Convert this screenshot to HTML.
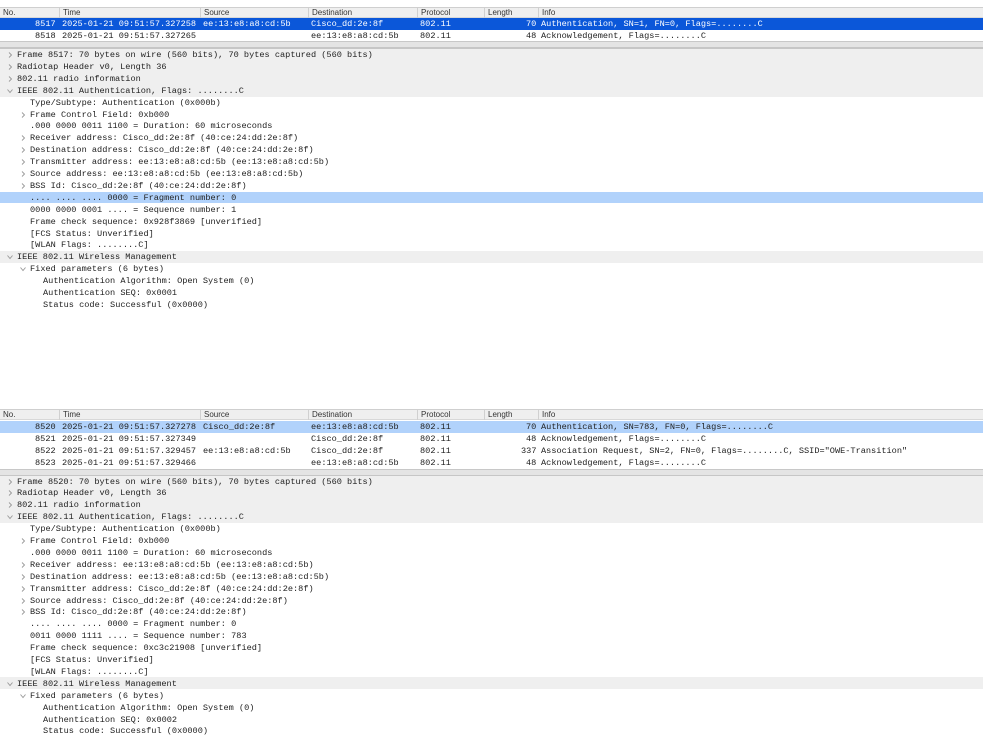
<!DOCTYPE html>
<html><head><meta charset="utf-8"><style>
*{margin:0;padding:0;box-sizing:border-box}
body{width:999px;height:752px;background:#fff;position:relative;overflow:hidden;font-family:"Liberation Mono",monospace;font-size:8.6px;color:#222}
.hdr{position:absolute;left:0;width:983px;height:11px;background:#efefef;border-top:1px solid #cfcfcf;border-bottom:1px solid #d8d8d8;font-family:"Liberation Sans",sans-serif;font-size:8px;color:#333}
.hdr span{position:absolute;top:0;line-height:10px;padding-left:3px;border-left:1px solid #d0d0d0}
.row{position:absolute;left:0;width:983px;height:12px;line-height:12px;white-space:pre}
.row span{position:absolute;top:0}
.sel{background:#0b57d9;color:#fff}
.lsel{background:#b1d2fb}
.gray{background:#efefef}
.sep{position:absolute;left:0;width:983px;height:8px;background:#e4e4e4;border-top:1px solid #c8c8c8;border-bottom:2px solid #c6c6c6}
.d{position:absolute;left:0;width:983px;height:12px;line-height:12px;white-space:pre}
.d svg{position:absolute;top:3px}
</style></head><body>

<div class="hdr" style="top:7px"><span style="left:0;border:0">No.</span><span style="left:59px">Time</span><span style="left:200px">Source</span><span style="left:308px">Destination</span><span style="left:417px">Protocol</span><span style="left:484px">Length</span><span style="left:538px">Info</span></div>
<div class="row sel" style="top:18px"><span style="left:35px">8517</span><span style="left:62px">2025-01-21 09:51:57.327258</span><span style="left:203px">ee:13:e8:a8:cd:5b</span><span style="left:311px">Cisco_dd:2e:8f</span><span style="left:420px">802.11</span><span style="left:526px">70</span><span style="left:541px">Authentication, SN=1, FN=0, Flags=........C</span></div>
<div class="row" style="top:30px"><span style="left:35px">8518</span><span style="left:62px">2025-01-21 09:51:57.327265</span><span style="left:311px">ee:13:e8:a8:cd:5b</span><span style="left:420px">802.11</span><span style="left:526px">48</span><span style="left:541px">Acknowledgement, Flags=........C</span></div>
<div class="sep" style="top:41px"></div>

<div class="gray" style="position:absolute;left:0;top:49px;width:983px;height:48px"></div>
<div class="gray" style="position:absolute;left:0;top:251px;width:983px;height:12px"></div>
<div class="lsel" style="position:absolute;left:0;top:192px;width:983px;height:11px"></div>

<div id="top"></div>

<div class="hdr" style="top:409px"><span style="left:0;border:0">No.</span><span style="left:59px">Time</span><span style="left:200px">Source</span><span style="left:308px">Destination</span><span style="left:417px">Protocol</span><span style="left:484px">Length</span><span style="left:538px">Info</span></div>
<div class="row lsel" style="top:421px"><span style="left:35px">8520</span><span style="left:62px">2025-01-21 09:51:57.327278</span><span style="left:203px">Cisco_dd:2e:8f</span><span style="left:311px">ee:13:e8:a8:cd:5b</span><span style="left:420px">802.11</span><span style="left:526px">70</span><span style="left:541px">Authentication, SN=783, FN=0, Flags=........C</span></div>
<div class="row" style="top:433px"><span style="left:35px">8521</span><span style="left:62px">2025-01-21 09:51:57.327349</span><span style="left:311px">Cisco_dd:2e:8f</span><span style="left:420px">802.11</span><span style="left:526px">48</span><span style="left:541px">Acknowledgement, Flags=........C</span></div>
<div class="row" style="top:445px"><span style="left:35px">8522</span><span style="left:62px">2025-01-21 09:51:57.329457</span><span style="left:203px">ee:13:e8:a8:cd:5b</span><span style="left:311px">Cisco_dd:2e:8f</span><span style="left:420px">802.11</span><span style="left:521px">337</span><span style="left:541px">Association Request, SN=2, FN=0, Flags=........C, SSID="OWE-Transition"</span></div>
<div class="row" style="top:457px"><span style="left:35px">8523</span><span style="left:62px">2025-01-21 09:51:57.329466</span><span style="left:311px">ee:13:e8:a8:cd:5b</span><span style="left:420px">802.11</span><span style="left:526px">48</span><span style="left:541px">Acknowledgement, Flags=........C</span></div>
<div class="sep" style="top:469px"></div>
<div class="gray" style="position:absolute;left:0;top:476px;width:983px;height:47px"></div>
<div class="gray" style="position:absolute;left:0;top:677px;width:983px;height:12px"></div>

<div id="bot"></div>

<script>
function R(x){return '<svg width="6" height="6" style="left:'+x+'px" viewBox="0 0 6 6"><polyline points="2,0.5 4.5,3 2,5.5" fill="none" stroke="#999" stroke-width="0.9"/></svg>';}
function V(x){return '<svg width="6" height="6" style="left:'+x+'px" viewBox="0 0 6 6"><polyline points="0.5,1.5 3,4.5 5.5,1.5" fill="none" stroke="#999" stroke-width="0.9"/></svg>';}
function build(id,y0,lines){var h='';lines.forEach(function(l,i){var x=17+13*l[0];var ic=l[1]=='r'?R(x-10):(l[1]=='v'?V(x-10):'');h+='<div class="d" style="top:'+(y0+i*11.9)+'px">'+ic+'<span style="position:absolute;left:'+x+'px">'+l[2]+'</span></div>';});document.getElementById(id).outerHTML=h;}
var common1=[[0,'r','Frame 8517: 70 bytes on wire (560 bits), 70 bytes captured (560 bits)'],[0,'r','Radiotap Header v0, Length 36'],[0,'r','802.11 radio information'],[0,'v','IEEE 802.11 Authentication, Flags: ........C'],[1,'','Type/Subtype: Authentication (0x000b)'],[1,'r','Frame Control Field: 0xb000'],[1,'','.000 0000 0011 1100 = Duration: 60 microseconds'],[1,'r','Receiver address: Cisco_dd:2e:8f (40:ce:24:dd:2e:8f)'],[1,'r','Destination address: Cisco_dd:2e:8f (40:ce:24:dd:2e:8f)'],[1,'r','Transmitter address: ee:13:e8:a8:cd:5b (ee:13:e8:a8:cd:5b)'],[1,'r','Source address: ee:13:e8:a8:cd:5b (ee:13:e8:a8:cd:5b)'],[1,'r','BSS Id: Cisco_dd:2e:8f (40:ce:24:dd:2e:8f)'],[1,'','.... .... .... 0000 = Fragment number: 0'],[1,'','0000 0000 0001 .... = Sequence number: 1'],[1,'','Frame check sequence: 0x928f3869 [unverified]'],[1,'','[FCS Status: Unverified]'],[1,'','[WLAN Flags: ........C]'],[0,'v','IEEE 802.11 Wireless Management'],[1,'v','Fixed parameters (6 bytes)'],[2,'','Authentication Algorithm: Open System (0)'],[2,'','Authentication SEQ: 0x0001'],[2,'','Status code: Successful (0x0000)']];
build('top',49,common1);
var c2=[[0,'r','Frame 8520: 70 bytes on wire (560 bits), 70 bytes captured (560 bits)'],[0,'r','Radiotap Header v0, Length 36'],[0,'r','802.11 radio information'],[0,'v','IEEE 802.11 Authentication, Flags: ........C'],[1,'','Type/Subtype: Authentication (0x000b)'],[1,'r','Frame Control Field: 0xb000'],[1,'','.000 0000 0011 1100 = Duration: 60 microseconds'],[1,'r','Receiver address: ee:13:e8:a8:cd:5b (ee:13:e8:a8:cd:5b)'],[1,'r','Destination address: ee:13:e8:a8:cd:5b (ee:13:e8:a8:cd:5b)'],[1,'r','Transmitter address: Cisco_dd:2e:8f (40:ce:24:dd:2e:8f)'],[1,'r','Source address: Cisco_dd:2e:8f (40:ce:24:dd:2e:8f)'],[1,'r','BSS Id: Cisco_dd:2e:8f (40:ce:24:dd:2e:8f)'],[1,'','.... .... .... 0000 = Fragment number: 0'],[1,'','0011 0000 1111 .... = Sequence number: 783'],[1,'','Frame check sequence: 0xc3c21908 [unverified]'],[1,'','[FCS Status: Unverified]'],[1,'','[WLAN Flags: ........C]'],[0,'v','IEEE 802.11 Wireless Management'],[1,'v','Fixed parameters (6 bytes)'],[2,'','Authentication Algorithm: Open System (0)'],[2,'','Authentication SEQ: 0x0002'],[2,'','Status code: Successful (0x0000)']];
build('bot',475.5,c2);
</script>
</body></html>
